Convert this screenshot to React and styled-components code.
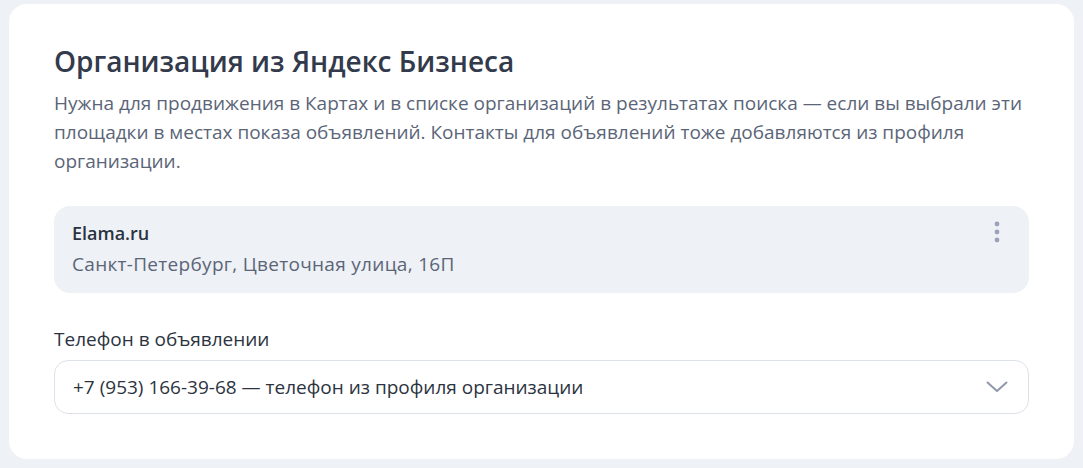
import React from "react"
import styled, { createGlobalStyle } from "styled-components"

const GlobalStyle = createGlobalStyle`
  body {
    margin: 0;
    background: #eef1f5;
    font-family: "Open Sans", "Noto Sans", sans-serif;
  }
`

const Page = styled.div`
  padding: 4px 9px 9px 9px;
`

const Card = styled.section`
  background: #fff;
  border-radius: 18px;
  padding: 39px 45px 45px 45px;
  display: flex;
  flex-direction: column;
`

const Title = styled.h2`
  margin: 0 0 10px;
  font-size: 28px;
  line-height: 36px;
  font-weight: 600;
  color: #323a4b;
`

const Description = styled.p`
  margin: 0;
  font-size: 19px;
  line-height: 29px;
  color: #5b6578;
`

const OrgBox = styled.div`
  margin-top: 30px;
  background: #eef1f5;
  border-radius: 16px;
  padding: 14px 18px 16px;
  display: flex;
  justify-content: space-between;
`

const OrgInfo = styled.div`
  display: flex;
  flex-direction: column;
  gap: 5px;
`

const OrgName = styled.div`
  font-size: 18px;
  line-height: 26px;
  font-weight: 600;
  color: #2c3340;
`

const OrgAddress = styled.div`
  font-size: 19px;
  line-height: 26px;
  letter-spacing: 0.3px;
  color: #5b6578;
`

const MenuButton = styled.button`
  border: 0;
  background: none;
  padding: 0;
  width: 24px;
  height: 30px;
  margin-right: 2px;
  cursor: pointer;
  color: #9aa3b8;
  display: flex;
  align-items: flex-start;
  justify-content: center;
`

const Label = styled.div`
  margin-top: 33px;
  font-size: 19px;
  line-height: 26px;
  color: #2c3340;
`

const Select = styled.div`
  margin-top: 8px;
  height: 54px;
  box-sizing: border-box;
  border: 1px solid #dde1e9;
  border-radius: 14px;
  padding: 0 20px 0 18px;
  display: flex;
  align-items: center;
  justify-content: space-between;
  font-size: 19px;
  color: #2c3340;
`

const Dots = () => (
  <svg width="6" height="24" viewBox="0 0 6 24" fill="currentColor">
    <circle cx="3" cy="4" r="2.4" />
    <circle cx="3" cy="12" r="2.4" />
    <circle cx="3" cy="20" r="2.4" />
  </svg>
)

const Chevron = () => (
  <svg width="22" height="12" viewBox="0 0 22 12" fill="none">
    <path d="M1.5 1.5 L11 10 L20.5 1.5" stroke="#8f98ab" strokeWidth="2" strokeLinecap="round" strokeLinejoin="round" />
  </svg>
)

export default function App() {
  return (
    <Page>
      <GlobalStyle />
      <Card>
        <Title>Организация из Яндекс Бизнеса</Title>
        <Description>
          Нужна для продвижения в Картах и в списке организаций в результатах поиска — если вы выбрали эти
          площадки в местах показа объявлений. Контакты для объявлений тоже добавляются из профиля
          организации.
        </Description>
        <OrgBox>
          <OrgInfo>
            <OrgName>Elama.ru</OrgName>
            <OrgAddress>Санкт-Петербург, Цветочная улица, 16П</OrgAddress>
          </OrgInfo>
          <MenuButton aria-label="Меню">
            <Dots />
          </MenuButton>
        </OrgBox>
        <Label>Телефон в объявлении</Label>
        <Select>
          <span>+7 (953) 166-39-68 — телефон из профиля организации</span>
          <Chevron />
        </Select>
      </Card>
    </Page>
  )
}
